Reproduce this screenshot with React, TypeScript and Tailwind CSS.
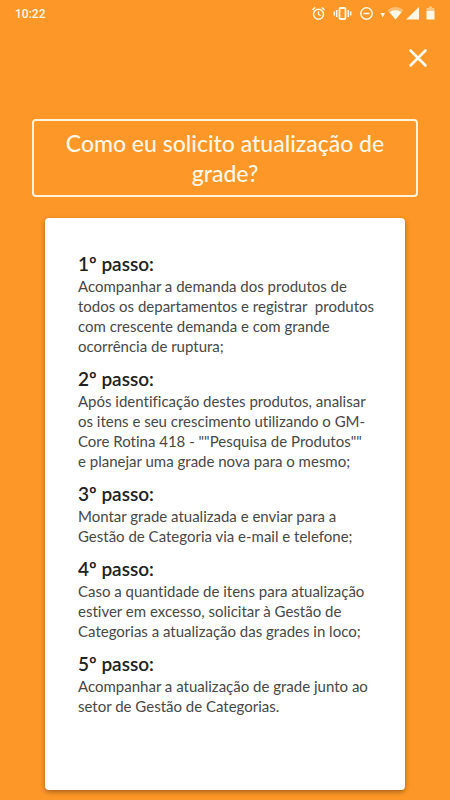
type Step = {
  title: string;
  text: string;
};

const STEPS: Step[] = [
  {
    title: "1º passo:",
    text: "Acompanhar a demanda dos produtos de\ntodos os departamentos e registrar  produtos\ncom crescente demanda e com grande\nocorrência de ruptura;",
  },
  {
    title: "2º passo:",
    text: 'Após identificação destes produtos, analisar\nos itens e seu crescimento utilizando o GM-\nCore Rotina 418 - ""Pesquisa de Produtos""\ne planejar uma grade nova para o mesmo;',
  },
  {
    title: "3º passo:",
    text: "Montar grade atualizada e enviar para a\nGestão de Categoria via e-mail e telefone;",
  },
  {
    title: "4º passo:",
    text: "Caso a quantidade de itens para atualização\nestiver em excesso, solicitar à Gestão de\nCategorias a atualização das grades in loco;",
  },
  {
    title: "5º passo:",
    text: "Acompanhar a atualização de grade junto ao\nsetor de Gestão de Categorias.",
  },
];

function StatusIcons() {
  return (
    <svg width="124" height="16" viewBox="0 0 124 16" fill="none" stroke="#fff8e6" aria-hidden="true">
      {/* alarm */}
      <circle cx="6.5" cy="8.2" r="5" strokeWidth="1.5" />
      <path d="M6.5 5.2v3.2l2.2 1.4" strokeWidth="1.2" />
      <path d="M.5 3.9l2.8-2.4M12.5 3.9L9.7 1.5" strokeWidth="1.5" />
      {/* vibrate */}
      <rect x="27.5" y="2" width="6" height="11" rx="1" strokeWidth="1.8" />
      <path d="M24.7 4v7M36.3 4v7M22.3 5.5v4M38.7 5.5v4" strokeWidth="1.5" />
      {/* do not disturb */}
      <circle cx="54.5" cy="7.5" r="5.7" strokeWidth="1.5" />
      <path d="M51.5 7.5h6" strokeWidth="1.6" />
      <g fill="#fff8e6" stroke="none">
        <path d="M68.5 7H73l-2.25 4.5z" />
        {/* wifi */}
        <path d="M75.5 4a12.5 12.5 0 0 1 16 0l-8 9.5z" opacity=".4" />
        <path d="M77.5 6.3a9.5 9.5 0 0 1 12 0l-6 7.2z" />
        {/* signal */}
        <path d="M107 1v12.5H94z" />
        {/* battery */}
        <path d="M117 .5h3V2h2.5v3h-8V2h2.500z" opacity=".5" />
        <path d="M114.5 5h8v8.500h-8z" />
      </g>
    </svg>
  );
}

export default function App() {
  return (
    <div className="flex min-h-screen flex-col bg-[#fd9727] font-['Lato',sans-serif] [font-variant-ligatures:none]">
      <div className="flex h-7 items-center justify-between pr-[14px] pl-[15px]">
        <span className="font-['Roboto',sans-serif] text-xs font-medium text-[#fff8e6]">10:22</span>
        <StatusIcons />
      </div>

      <header className="flex justify-end px-5 pt-[18px]">
        <button type="button" aria-label="Fechar" className="flex h-6 w-6 items-center justify-center">
          <svg width="20" height="20" viewBox="0 0 20 20" stroke="#fffdf5" strokeWidth="2.6" strokeLinecap="round">
            <path d="M2.5 2.5l15 15M17.5 2.5l-15 15" />
          </svg>
        </button>
      </header>

      <main className="flex flex-1 flex-col px-8 pt-[49px] pb-[10px]">
        <h1 className="rounded border-2 border-[#fff3dc] pt-[7px] pb-[7px] text-center text-[23px] leading-[30px] font-medium whitespace-pre-line text-[#fff8e6]">
          {"Como eu solicito atualização de\ngrade?"}
        </h1>

        <section className="mx-[13px] mt-[21px] flex flex-1 flex-col gap-[11px] rounded bg-white pt-[34px] pr-6 pb-8 pl-[33px] shadow-[0_2px_5px_rgba(0,0,0,0.35)]">
          {STEPS.map((step) => (
            <article key={step.title}>
              <h2 className="text-[19px] leading-6 font-semibold text-[#212121]">{step.title}</h2>
              <p className="text-[15px] leading-5 whitespace-pre-wrap text-[#484848]">{step.text}</p>
            </article>
          ))}
        </section>
      </main>
    </div>
  );
}
